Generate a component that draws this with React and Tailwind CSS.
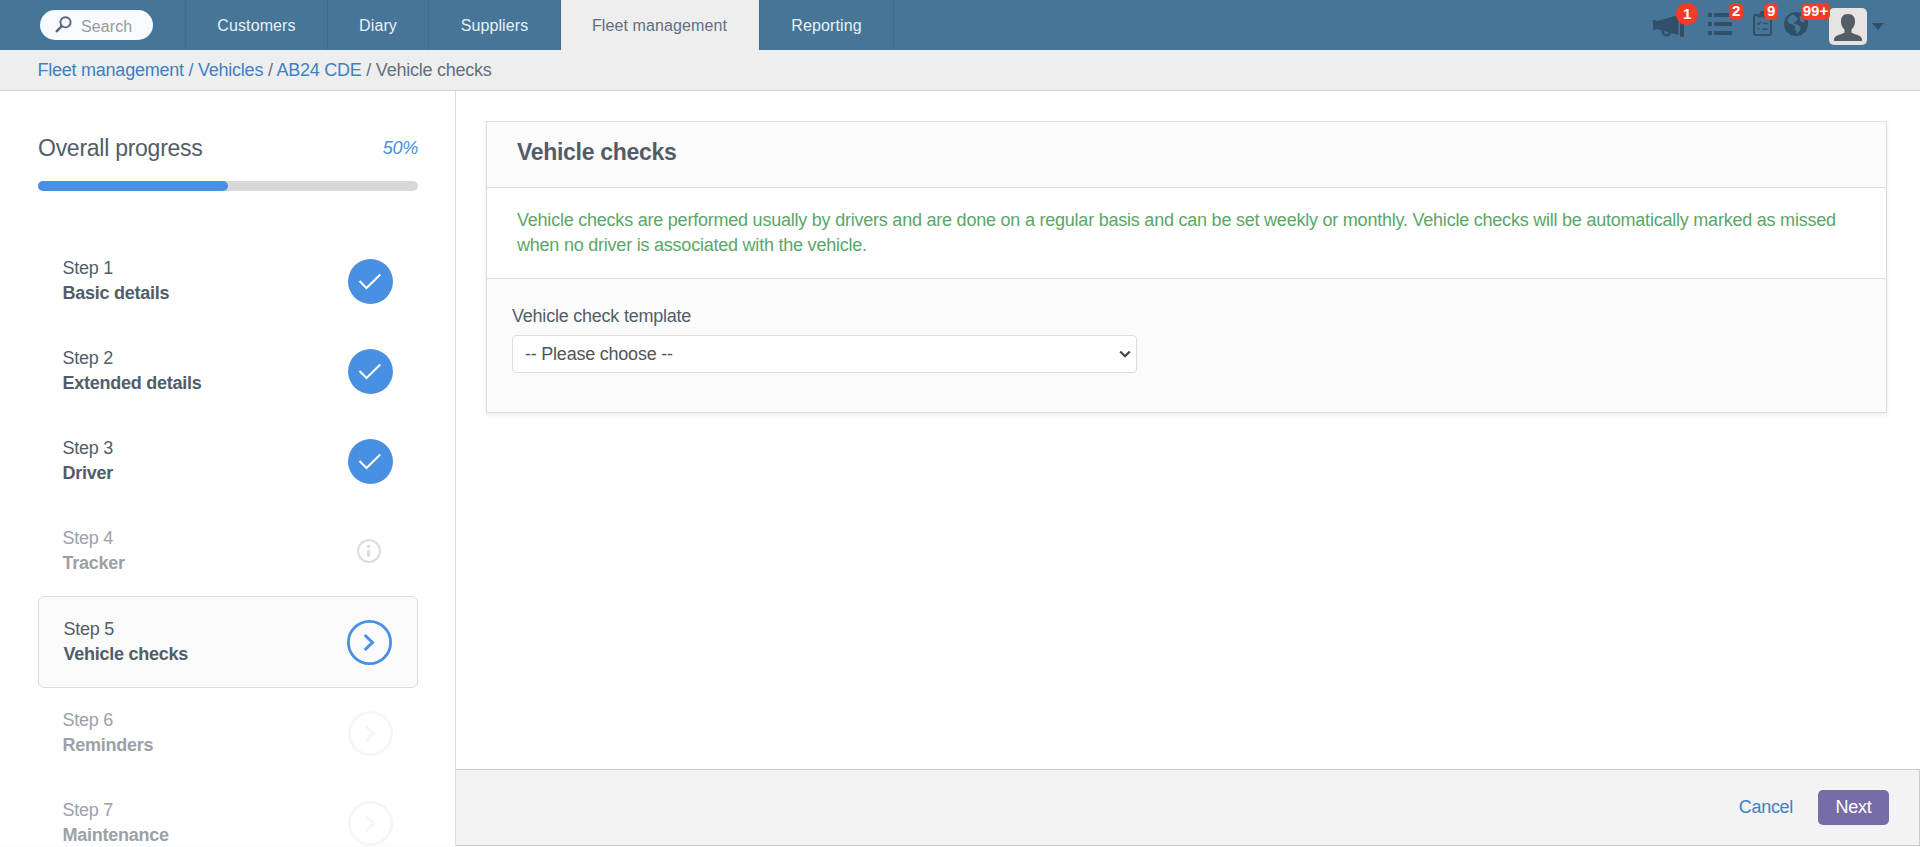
import React from "react";

const NAV = [
  { label: "Customers", cls: "w-[142px]" },
  { label: "Diary", cls: "w-[101px]" },
  { label: "Suppliers", cls: "w-[132px]" },
  { label: "Fleet management", cls: "w-[199px] pr-px", active: true },
  { label: "Reporting", cls: "w-[134px]" },
];

const STEPS = [
  { n: 1, title: "Basic details", state: "done" },
  { n: 2, title: "Extended details", state: "done" },
  { n: 3, title: "Driver", state: "done" },
  { n: 4, title: "Tracker", state: "info" },
  { n: 5, title: "Vehicle checks", state: "current" },
  { n: 6, title: "Reminders", state: "todo" },
  { n: 7, title: "Maintenance", state: "todo" },
];

function StepIcon({ state }) {
  if (state === "done") {
    return (
      <svg className="size-[45px]" viewBox="0 0 45 45" fill="none">
        <circle cx="22.5" cy="22.5" r="22.5" fill="#4a90e2" />
        <path d="M11.500 22l7 7L32.300 15.500" stroke="#fff" strokeWidth="2" />
      </svg>
    );
  }
  if (state === "info") {
    return (
      <svg className="mr-3 size-6" viewBox="0 0 24 24" fill="none">
        <circle cx="12" cy="12" r="11" stroke="#dcdcdc" strokeWidth="2" />
        <circle cx="11.5" cy="7.5" r="1.7" fill="#dcdcdc" />
        <path d="M11.5 12.200v4.300" stroke="#dcdcdc" strokeWidth="3" strokeLinecap="round" />
      </svg>
    );
  }
  const color = state === "current" ? "#4a90e2" : "#f6f6f6";
  return (
    <svg className="size-[45px]" viewBox="0 0 45 45" fill="none">
      <circle cx="22.5" cy="22.5" r="21.1" stroke={color} strokeWidth="2.8" />
      <path d="M17.7 15l7.8 7.5-7.8 7.5" stroke={color} strokeWidth="3" />
    </svg>
  );
}

function Step({ n, title, state }) {
  const current = state === "current";
  const faded = state === "info" || state === "todo";
  return (
    <li
      className={`flex shrink-0 items-center justify-between rounded-md pl-[24.5px] pr-[25px] ${
        current ? "h-[92px] border border-[#dddddd] bg-[#fafafa]" : "h-[90px]"
      }`}
    >
      <div className={`leading-[25px] tracking-[-0.26px] ${faded ? "text-[#9ba1a7]" : "text-[#525d69]"}`}>
        <div>Step {n}</div>
        <div className="font-bold">{title}</div>
      </div>
      <StepIcon state={state} />
    </li>
  );
}

export default function App() {
  return (
    <div className="flex h-[847px] w-full flex-col overflow-hidden bg-white font-['Liberation_Sans',Arial,sans-serif] text-[18px] tracking-[-0.3px] text-[#525d69]">
      <header className="flex h-[50px] shrink-0 bg-[#477597] text-[16px] tracking-[0.1px]">
        <div className="flex w-[186px] items-center border-r border-[#416b8a] pl-10">
          <div className="flex h-[30px] w-[113px] items-center rounded-full bg-[#f7faff] pl-[15px]">
            <svg className="-mt-0.5 size-[17px]" viewBox="0 0 17 17" fill="none" stroke="#5b6478">
              <circle cx="10.5" cy="6.3" r="5.1" strokeWidth="1.9" />
              <path d="M6.8 10.1L1 15.8" strokeWidth="2.4" />
            </svg>
            <span className="ml-[9px] mt-[3px] text-[#999999]">Search</span>
          </div>
        </div>
        <nav className="flex">
          {NAV.map((item) => (
            <a
              key={item.label}
              className={`flex items-center justify-center border-r border-[#416b8a] pt-0.5 ${item.cls} ${
                item.active ? "bg-[#eeeeee] text-[#646e80]" : "text-[#e9f1f7]"
              }`}
            >
              {item.label}
            </a>
          ))}
        </nav>
        <div className="relative ml-auto flex w-[268px] tracking-[-0.5px] text-[#305067]">
          <svg className="absolute left-0 top-[14px] h-[23px] w-[33px]" viewBox="0 0 33 23" fill="currentColor">
            <path d="M1 6h2l1.500 1.200L26.500 1v20L4.500 15 3 16H1z" />
            <rect x="28" y="1" width="4" height="22" rx="1" />
            <path d="M10.500 16.500a4 3.800 0 0 0 8 1.500" fill="none" stroke="currentColor" strokeWidth="2.400" />
          </svg>
          <svg className="absolute left-[56px] top-[13px] h-[22px] w-[24px]" viewBox="0 0 24 22" fill="currentColor">
            <path d="M0 0h4v4H0zM6 0h18v4H6zM0 9h4v4H0zM6 9h18v4H6zM0 18h4v4H0zM6 18h18v4H6z" />
          </svg>
          <svg className="absolute left-[101px] top-[11px] h-[25px] w-[19px]" viewBox="0 0 19 25" fill="none" stroke="currentColor">
            <rect x="1" y="4" width="17" height="20" rx="2" strokeWidth="2" />
            <path d="M4.500 3h2a3 3 0 0 1 6 0h2v3.500h-10z" fill="currentColor" stroke="none" />
            <path d="M4 12l1.500 1.500L8 10.800M10 12.500h4.500M4.500 18h2M9 18h5.500" strokeWidth="1.500" />
          </svg>
          <svg className="absolute left-[132px] top-[12px] size-6" viewBox="0 0 24 24">
            <circle cx="12" cy="12" r="12" fill="currentColor" />
            <path
              d="M9.500 2.500c-3 .8-5.500 3-6.300 6.200l2.300 2.800 3 .8 2.500 2-.5 2.700 1.700 2v2.500c3-1.500 5-4 4.500-6.500l-3.200-2.300-3.500-.8.5-1.900 2-.7 1.500-2.300-1.500-1.500z"
              fill="#477597"
            />
            <path d="M15.500 3.200l2.500 1.300 3 5-2.500 1-2.500-2z" fill="#477597" />
          </svg>
          <svg className="ml-[177px] mt-2 h-[37px] w-[38px]" viewBox="0 0 38 37">
            <rect width="38" height="37" rx="5" fill="#e7e3e3" />
            <path d="M19 6c-5 0-7.300 3.500-7 8 .3 3.500 1.500 6 3.500 7.500v3C13 26.500 5 27 5 31.500V33h28v-1.500c0-4.500-8-5-10.500-7v-3c2-1.500 3.200-4 3.500-7.500.3-4.500-2-8-7-8z" fill="#525d66" />
          </svg>
          <svg className="ml-[5px] mt-[23px] h-[7px] w-3" viewBox="0 0 12 7" fill="currentColor">
            <path d="M0 0h12L6 7z" />
          </svg>
          <span className="absolute left-[24px] top-[3px] flex size-[22px] items-center justify-center rounded-full bg-[#f23c27] text-[15px] font-bold text-white">1</span>
          <span className="absolute left-[77px] top-[3px] flex h-[17px] w-[14px] items-center justify-center rounded-[5px] bg-[#f23c27] text-[15px] font-bold text-white">2</span>
          <span className="absolute left-[112px] top-[3px] flex h-[17px] w-[14px] items-center justify-center rounded-[5px] bg-[#f23c27] text-[15px] font-bold text-white">9</span>
          <span className="absolute left-[149px] top-[3px] flex h-[17px] w-[29px] items-center justify-center rounded-[5px] bg-[#f23c27] text-[15px] font-bold tracking-[0px] text-white">99+</span>
        </div>
      </header>

      <div className="flex h-[41px] shrink-0 items-center border-b border-[#cfd6d6] bg-[#eeeeee] pl-[37.5px] tracking-[-0.24px] text-[#646e80]">
        <div className="whitespace-pre">
          <a className="text-[#3f80c4]">Fleet management / </a>
          <a className="text-[#3f80c4]">Vehicles</a> / <a className="text-[#3f80c4]">AB24 CDE</a> / Vehicle checks
        </div>
      </div>

      <div className="flex h-[755px] shrink-0">
        <aside className="flex w-[456px] shrink-0 flex-col overflow-hidden border-r border-[#dcdcdc] pl-[38px] pr-[37px]">
          <div className="mt-[42px] flex h-[30px] items-center justify-between">
            <h2 className="text-[23px] tracking-[-0.26px]">Overall progress</h2>
            <span className="italic text-[#4a90e2]">50%</span>
          </div>
          <div className="mt-[18px] h-[10px] shrink-0 rounded-full bg-[#d8d8d8]">
            <div className="h-full w-1/2 rounded-full bg-[#4a90e2]" />
          </div>
          <ul className="mt-[45px]">
            {STEPS.map((s) => (
              <Step key={s.n} {...s} />
            ))}
          </ul>
        </aside>

        <main className="flex flex-1 flex-col">
          <div className="flex-1 pl-[30px] pr-[33px] pt-[30px] tracking-[-0.225px]">
            <section className="border border-[#dddddd] bg-[#fbfbfb] shadow-[0_2px_4px_rgba(0,0,0,0.08)]">
              <h1 className="h-[66px] border-b border-[#dcdcdc] pl-[30px] pt-[14px] text-[23px] font-bold leading-[32px] tracking-[-0.3px]">
                Vehicle checks
              </h1>
              <p className="h-[91px] border-b border-[#dcdcdc] bg-white pl-[30px] pr-[30px] pt-[20px] leading-[25px] text-[#5ba669]">
                Vehicle checks are performed usually by drivers and are done on a regular basis and can be set weekly or monthly. Vehicle checks will be automatically marked as missed when no driver is associated with the vehicle.
              </p>
              <div className="h-[133px] pl-[25px] pt-[25px]">
                <div className="leading-[25px]">Vehicle check template</div>
                <div className="mt-[6px] flex h-[38px] w-[625px] items-center justify-between rounded border border-[#dddddd] bg-white pl-3 pr-[5px] text-[#555555]">
                  <span>-- Please choose --</span>
                  <svg className="size-3" viewBox="0 0 12 12" fill="none">
                    <path d="M1.200 3.500L6 8.300l4.800-4.800" stroke="#444" strokeWidth="2.200" />
                  </svg>
                </div>
              </div>
            </section>
          </div>
          <footer className="flex h-[77px] items-center justify-end border-y border-r border-[#cccccc] bg-[#f3f3f3] pr-[30px]">
            <a className="mr-[25px] text-[#3f80c4]">Cancel</a>
            <button className="h-[35px] w-[71px] rounded-[5px] bg-[#766ca7] text-white">Next</button>
          </footer>
        </main>
      </div>
      <div className="h-px bg-[#f7faff]" />
    </div>
  );
}
